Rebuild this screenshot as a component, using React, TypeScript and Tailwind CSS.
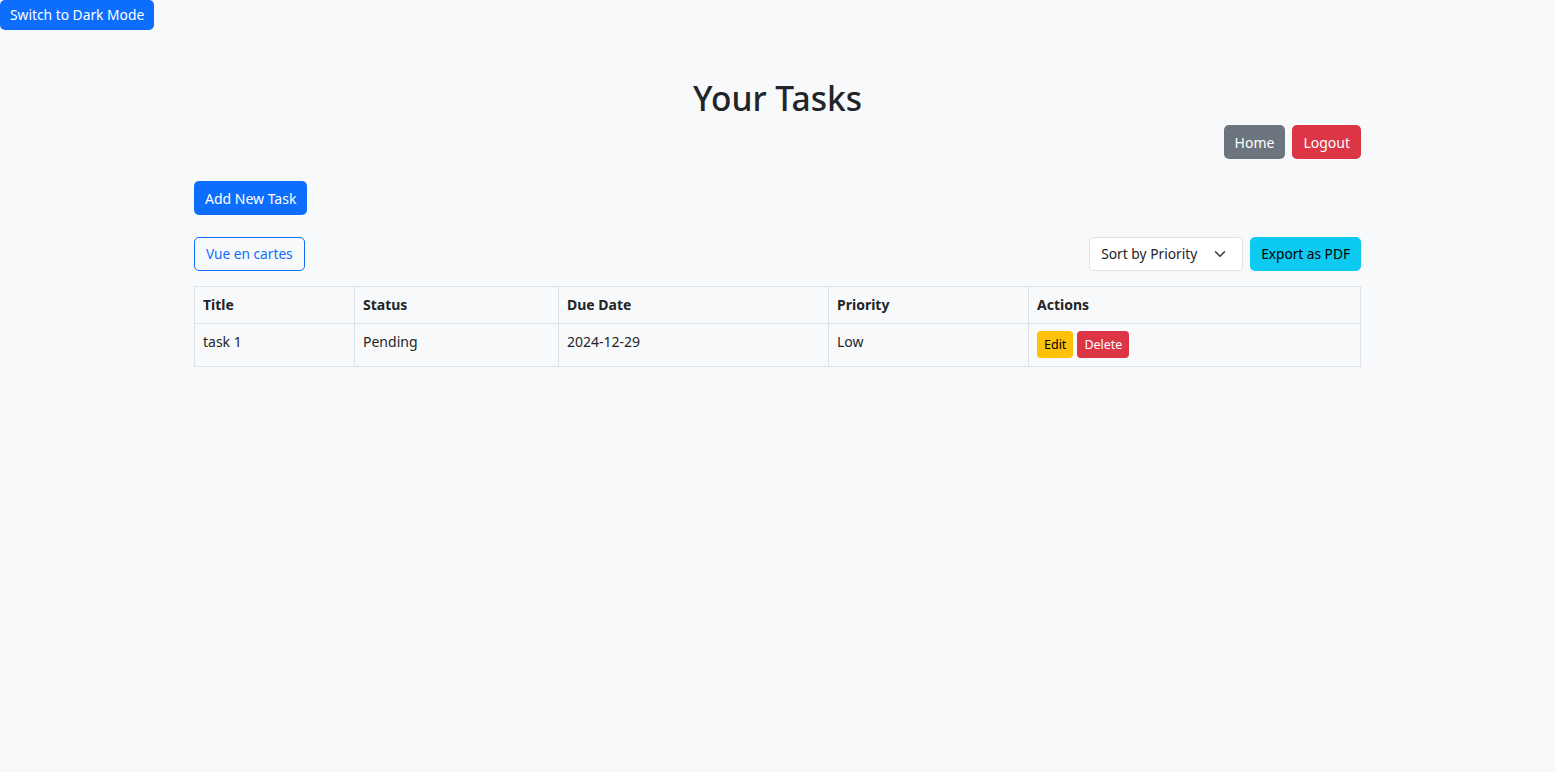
import React from "react";

const font = { fontFamily: '"Noto Sans", "Open Sans", sans-serif' };

export default function App() {
  return (
    <div className="min-h-screen bg-[#f8f9fa] text-[#212529] text-[14.4px] leading-[1.5]" style={font}>
      <button className="block h-[30px] px-[10px] bg-[#0d6efd] text-white text-[13.8px] rounded-[5px] leading-[30px]">
        Switch to Dark Mode
      </button>
      <div className="w-[1167px] mx-auto">
        <h1 className="mt-[47px] mb-[5px] text-center text-[33.5px] font-medium leading-[43px]">Your Tasks</h1>
        <div className="flex justify-end gap-[7px]">
          <button className="h-[34px] px-[11px] rounded-[5px] bg-[#6c757d] text-white text-[14px]">Home</button>
          <button className="h-[34px] px-[11px] rounded-[5px] bg-[#dc3545] text-white text-[14px]">Logout</button>
        </div>
        <div className="mt-[22px]">
          <button className="h-[34px] px-[11px] rounded-[5px] bg-[#0d6efd] text-white text-[14px]">Add New Task</button>
        </div>
        <div className="mt-[22px] flex items-center justify-between">
          <button className="h-[34px] px-[11px] rounded-[5px] border border-[#0d6efd] text-[#0d6efd] text-[13.7px]">Vue en cartes</button>
          <div className="flex items-center gap-[7px]">
            <div className="w-[154px] h-[34px] bg-white border border-[#dee2e6] rounded-[5px] flex items-center justify-between pl-[11px] pr-[16px] text-[13.8px]">
              <span>Sort by Priority</span>
              <svg width="12" height="12" viewBox="0 0 16 16" fill="none" stroke="#343a40" strokeWidth="2" strokeLinecap="round" strokeLinejoin="round">
                <path d="M2 5l6 6 6-6" />
              </svg>
            </div>
            <button className="h-[34px] px-[11px] rounded-[5px] bg-[#0dcaf0] text-black text-[13.7px]">Export as PDF</button>
          </div>
        </div>
        <table className="mt-[15px] w-full border-collapse text-[14px] leading-[22px]">
          <thead>
            <tr className="font-bold">
              <th className="w-[160px] border border-[#dee2e6] text-left align-top px-[8px] py-[7px]">Title</th>
              <th className="w-[204px] border border-[#dee2e6] text-left align-top px-[8px] py-[7px]">Status</th>
              <th className="w-[270px] border border-[#dee2e6] text-left align-top px-[8px] py-[7px]">Due Date</th>
              <th className="w-[200px] border border-[#dee2e6] text-left align-top px-[8px] py-[7px]">Priority</th>
              <th className="border border-[#dee2e6] text-left align-top px-[8px] py-[7px]">Actions</th>
            </tr>
          </thead>
          <tbody>
            <tr>
              <td className="border border-[#dee2e6] align-top px-[8px] pt-[7px] pb-[8px]">task 1</td>
              <td className="border border-[#dee2e6] align-top px-[8px] pt-[7px] pb-[8px]">Pending</td>
              <td className="border border-[#dee2e6] align-top px-[8px] pt-[7px] pb-[8px]">2024-12-29</td>
              <td className="border border-[#dee2e6] align-top px-[8px] pt-[7px] pb-[8px]">Low</td>
              <td className="border border-[#dee2e6] align-top px-[8px] pt-[7px] pb-[8px]">
                <div className="flex gap-[4px]">
                  <button className="h-[27px] px-[7px] rounded-[4px] bg-[#ffc107] text-black text-[12.5px] leading-[27px]">Edit</button>
                  <button className="h-[27px] px-[7px] rounded-[4px] bg-[#dc3545] text-white text-[12.5px] leading-[27px]">Delete</button>
                </div>
              </td>
            </tr>
          </tbody>
        </table>
      </div>
    </div>
  );
}
